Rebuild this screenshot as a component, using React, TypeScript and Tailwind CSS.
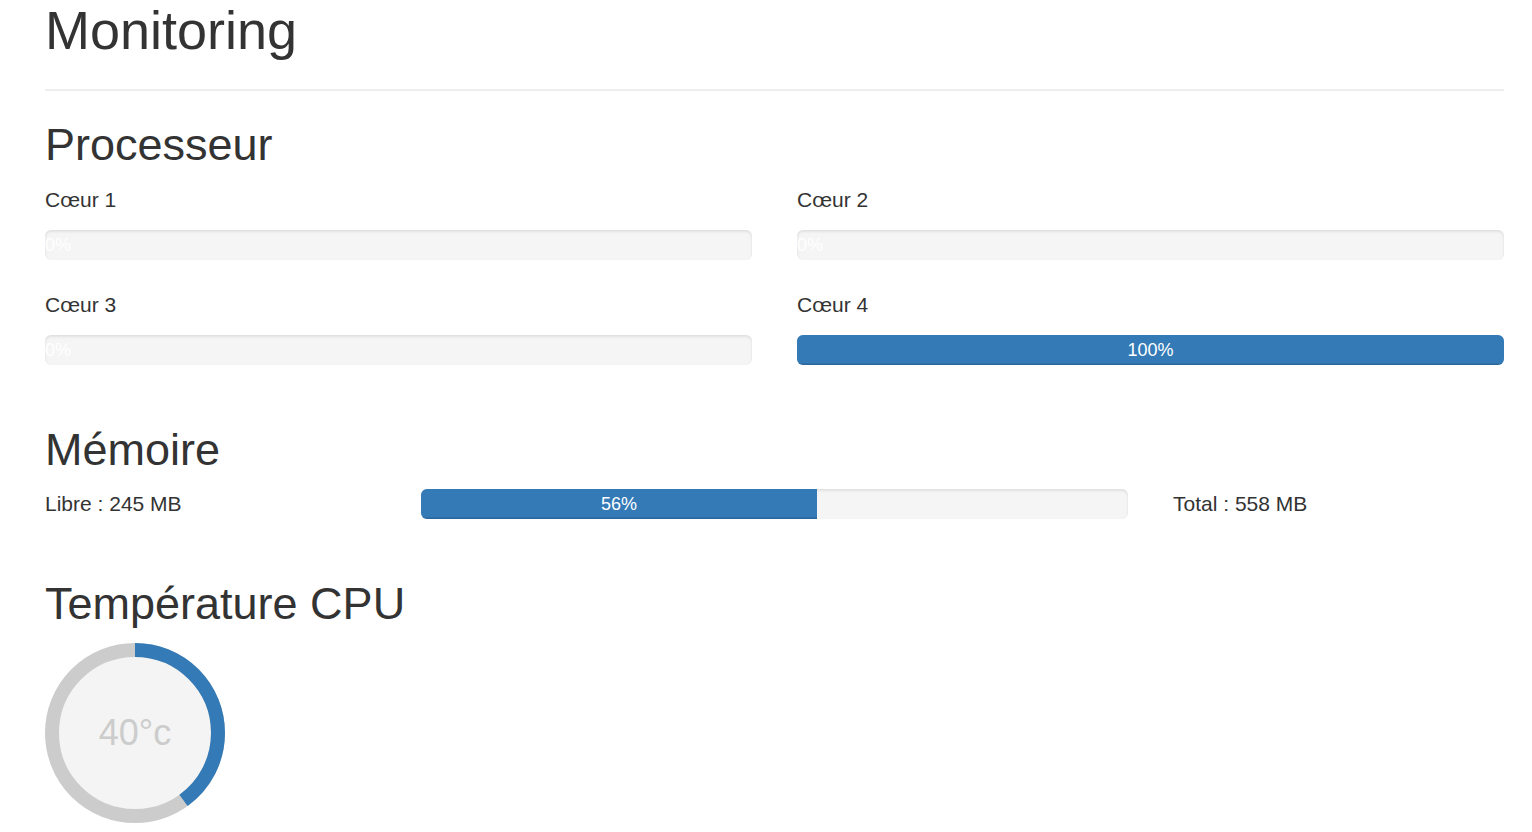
import React from 'react';

const cores = [
  { label: 'Cœur 1', value: 0 },
  { label: 'Cœur 2', value: 0 },
  { label: 'Cœur 3', value: 0 },
  { label: 'Cœur 4', value: 100 },
];

function Bar({ value }: { value: number }) {
  return (
    <div className="h-[30px] mb-[30px] rounded-[6px] bg-[#f5f5f5] overflow-hidden shadow-[inset_0_1.5px_3px_rgba(0,0,0,0.1)]">
      <div
        className="h-full bg-[#337ab7] text-white text-[18px] leading-[30px] text-center whitespace-nowrap shadow-[inset_0_-1.5px_0_rgba(0,0,0,0.15)]"
        style={{ width: `${value}%` }}
      >
        {value}%
      </div>
    </div>
  );
}

function Gauge({ value }: { value: number }) {
  const r = 83;
  const c = 2 * Math.PI * r;
  return (
    <div className="relative w-[180px] h-[180px] -mt-[1px]">
      <svg width="180" height="180" viewBox="0 0 180 180">
        <circle cx="90" cy="90" r={r} fill="#f4f4f4" stroke="#cccccc" strokeWidth="14" />
        <circle
          cx="90"
          cy="90"
          r={r}
          fill="none"
          stroke="#337ab7"
          strokeWidth="14"
          strokeDasharray={`${(c * value) / 100} ${c}`}
          transform="rotate(-90 90 90)"
        />
      </svg>
      <div className="absolute inset-0 flex items-center justify-center text-[36px] text-[#cccccc]">
        {value}°c
      </div>
    </div>
  );
}

export default function App() {
  const free = 245;
  const total = 558;
  const used = 56;

  return (
    <div className="bg-white min-h-screen pl-[45px] pt-[1px] font-['Liberation_Sans',Arial,sans-serif] text-[#333]">
      <div className="w-[1459px]">
        {/* header */}
        <div className="pb-[28.6px] border-b-2 border-[#eeeeee]">
          <h1 className="text-[54px] leading-[59.4px]">Monitoring</h1>
        </div>

        {/* processeur */}
        <h2 className="mt-[29.4px] mb-[15px] text-[45px] leading-[49.5px]">Processeur</h2>
        <div className="grid grid-cols-2 gap-x-[45px]">
          {cores.map(core => (
            <div key={core.label}>
              <p className="text-[21px] leading-[30px] mb-[15px]">{core.label}</p>
              <Bar value={core.value} />
            </div>
          ))}
        </div>

        {/* mémoire */}
        <h2 className="mt-[30px] mb-[15px] text-[45px] leading-[49.5px]">Mémoire</h2>
        <div className="grid grid-cols-[331px_707px_331px] gap-x-[45px]">
          <p className="text-[21px] leading-[30px]">Libre : {free} MB</p>
          <Bar value={used} />
          <p className="text-[21px] leading-[30px]">Total : {total} MB</p>
        </div>

        {/* température */}
        <h2 className="mt-[30px] mb-[15px] text-[45px] leading-[49.5px]">Température CPU</h2>
        <Gauge value={40} />
      </div>
    </div>
  );
}
